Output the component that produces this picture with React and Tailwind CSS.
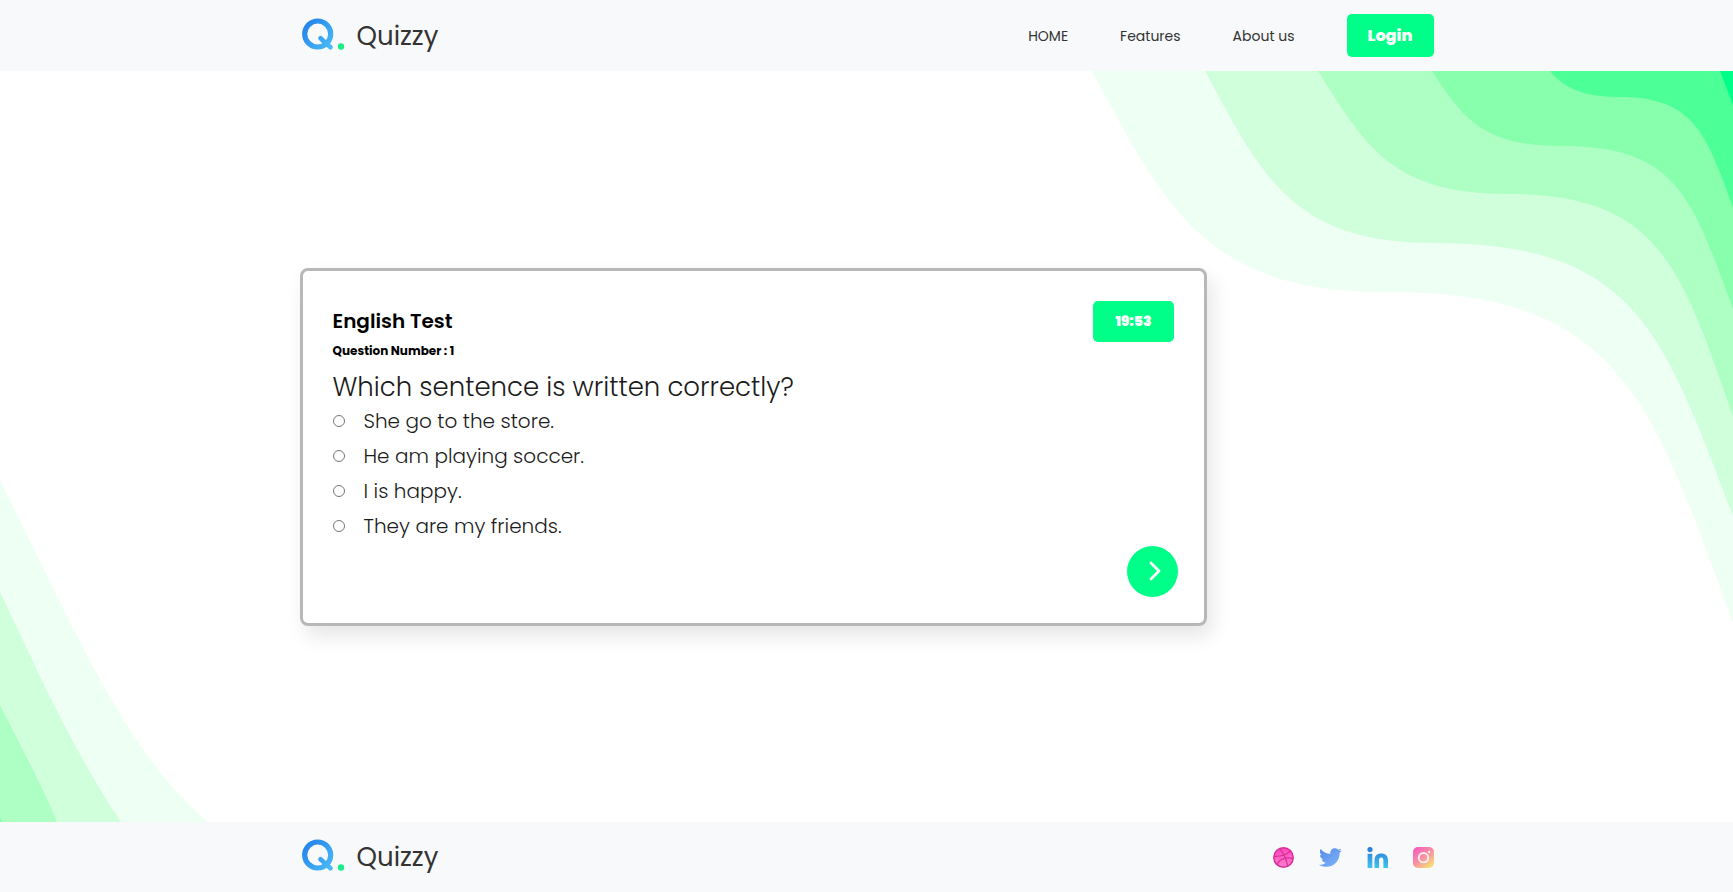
import React from "react";
import { FaTwitter } from "react-icons/fa";

const options = [
  "She go to the store.",
  "He am playing soccer.",
  "I is happy.",
  "They are my friends.",
];

function Waves() {
  return (
    <svg
      className="absolute inset-0 h-full w-full"
      viewBox="0 0 1733 751"
      preserveAspectRatio="none"
      aria-hidden="true"
    >
      <g transform="translate(0 -71)">
        <path fill="#eefff4" d="M1092 71C1165 207 1205 292 1385 292C1620 290 1652 400 1733 623V71Z" />
        <path fill="#cfffdb" d="M1205 71C1262 177 1293 243 1434 243C1636 243 1663 332 1733 516V71Z" />
        <path fill="#adffc4" d="M1318 71C1366 147 1392 194 1509 194C1660 194 1681 268 1733 416V71Z" />
        <path fill="#87ffad" d="M1432 71C1464 120 1484 146 1563 146C1678 146 1693 200 1733 309V71Z" />
        <path fill="#4dff97" d="M1550 71C1563 87 1582 97 1620 97C1696 97 1707 137 1733 207V71Z" />
        <path fill="#00ff88" d="M1720 71L1733 105V71Z" />
        <path fill="#eefff4" d="M0 480L67 617C120 722 160 782 208 822H0Z" />
        <path fill="#cfffdb" d="M0 592L43 683C72 742 98 788 121 822H0Z" />
        <path fill="#adffc4" d="M0 705L33 770Q46 795 57 822H0Z" />
        <path fill="#87ffad" d="M0 818L2 822H0Z" />
      </g>
    </svg>
  );
}

function Logo({ id }) {
  return (
    <a href="#home" className="flex items-center gap-[13px] text-[26px] leading-8 text-[#333333]">
      <svg className="h-8 w-11 overflow-visible" viewBox="0 0 44 32" fill="none" aria-hidden="true">
        <defs>
          <linearGradient id={id} x1="3" y1="2" x2="32" y2="28" gradientUnits="userSpaceOnUse">
            <stop stopColor="#2180ea" />
            <stop offset="1" stopColor="#4bbcf8" />
          </linearGradient>
        </defs>
        <circle cx="17.7" cy="14" r="13" stroke={`url(#${id})`} strokeWidth="5.2" />
        <path d="M20.5 18.2L30.5 27.2" stroke={`url(#${id})`} strokeWidth="4.6" strokeLinecap="round" />
        <circle cx="41" cy="26.5" r="3.2" fill="#1dec8b" />
      </svg>
      <span>Quizzy</span>
    </a>
  );
}

function Dribbble() {
  return (
    <svg className="size-[21px]" viewBox="0 0 21 21" fill="none" aria-hidden="true">
      <defs>
        <linearGradient id="drib" x1="0" y1="0" x2="0" y2="21" gradientUnits="userSpaceOnUse">
          <stop stopColor="#ff45b8" />
          <stop offset="1" stopColor="#ff7fce" />
        </linearGradient>
      </defs>
      <circle cx="10.5" cy="10.5" r="9.7" fill="url(#drib)" stroke="#d9309c" strokeWidth="1.5" />
      <path
        d="M6.8 1.8C10.8 6.8 13.4 12 14.7 19M1 9.4C7.5 9.6 13.8 8.2 17.4 3.7M3.9 17.4C7 11.9 13 9.9 20 11.5"
        stroke="#d9309c"
        strokeWidth="1.3"
      />
    </svg>
  );
}

function Twitter() {
  return (
    <>
      <svg className="absolute size-0" aria-hidden="true">
        <defs>
          <linearGradient id="tw" x1="0" y1="0" x2="1" y2="1">
            <stop stopColor="#5387e8" />
            <stop offset="1" stopColor="#83b9fb" />
          </linearGradient>
        </defs>
      </svg>
      <FaTwitter className="size-[23px] fill-[url(#tw)]" aria-hidden="true" />
    </>
  );
}

function Linkedin() {
  return (
    <svg className="size-[21px]" viewBox="0 0 21 21" aria-hidden="true">
      <defs>
        <linearGradient id="li" x1="0" y1="0" x2="0" y2="21" gradientUnits="userSpaceOnUse">
          <stop stopColor="#2b78d4" />
          <stop offset="1" stopColor="#42c3ee" />
        </linearGradient>
      </defs>
      <g fill="url(#li)">
        <circle cx="3" cy="2.6" r="2.6" />
        <path d="M.6 6.8H5.3V21H.6Z" />
        <path d="M7.5 21V13.5C7.5 9 10 6.5 14.2 6.5C18.5 6.5 21 9 21 13.2V21H16.4V13.5C16.4 11.6 15.8 10.6 14.3 10.6C12.7 10.6 12.1 11.7 12.1 13.5V21Z" />
      </g>
    </svg>
  );
}

function Instagram() {
  return (
    <svg className="size-[21px]" viewBox="0 0 21 21" fill="none" aria-hidden="true">
      <defs>
        <linearGradient id="ig" x1="3" y1="1" x2="18" y2="20" gradientUnits="userSpaceOnUse">
          <stop stopColor="#f65fbd" />
          <stop offset=".5" stopColor="#f793a0" />
          <stop offset="1" stopColor="#f8e075" />
        </linearGradient>
      </defs>
      <rect width="21" height="21" rx="5" fill="url(#ig)" />
      <circle cx="10.5" cy="10.7" r="4.7" stroke="#fdeef3" strokeWidth="1.9" />
      <circle cx="16.2" cy="5" r="1.2" fill="#fdeef3" />
    </svg>
  );
}

const socials = [
  ["Dribbble", Dribbble],
  ["Twitter", Twitter],
  ["LinkedIn", Linkedin],
  ["Instagram", Instagram],
];

export default function App() {
  return (
    <div className="flex min-h-screen flex-col bg-white font-[Poppins,Inter,sans-serif] text-black">
      <header className="bg-[#f8f9fb] py-[14px]">
        <div className="mx-auto flex w-full max-w-[1134px] items-center justify-between">
          <Logo id="logo-top" />
          <nav className="flex items-center gap-[52px] text-[14px] leading-[22px] text-[#333333]">
            <a href="#home">HOME</a>
            <a href="#features">Features</a>
            <a href="#about">About us</a>
            <button
              type="button"
              className="h-[43px] w-[87px] rounded-[5px] bg-[#00ff88] text-base font-extrabold text-white"
            >
              Login
            </button>
          </nav>
        </div>
      </header>

      <main className="relative flex flex-1 items-center">
        <Waves />
        <div className="relative mx-auto w-full max-w-[1134px]">
          <form className="w-4/5 rounded-lg border-3 border-[#b8b8b8] bg-white pt-[30px] pb-[26px] shadow-[5px_10px_20px_rgba(0,0,0,0.1)]">
            <div className="px-[30px]">
              <div className="flex items-center justify-between">
                <h1 className="text-[20px] font-semibold">English Test</h1>
                <time className="rounded-[5px] bg-[#00ff88] px-[22px] text-[14px] leading-[41px] font-black text-white">
                  19:53
                </time>
              </div>
              <h2 className="text-[12px] leading-[18px] font-bold">Question Number : 1</h2>
              <fieldset className="mt-[10px] text-[#1c1c1c]">
                <legend className="text-[26px] leading-[34px] font-light">
                  Which sentence is written correctly?
                </legend>
                {options.map((option) => (
                  <label key={option} className="flex h-[35px] items-center gap-[19px] text-[20px] font-light">
                    <input type="radio" name="answer" className="size-3" />
                    {option}
                  </label>
                ))}
              </fieldset>
            </div>
            <div className="mt-[2px] flex justify-end px-[26px]">
              <button
                type="button"
                aria-label="Next question"
                className="flex size-[51px] items-center justify-center rounded-full bg-[#00ff88]"
              >
                <svg className="size-6" viewBox="0 0 24 24" fill="none" aria-hidden="true">
                  <path
                    d="M11 4L19 12L11 20"
                    stroke="#fff"
                    strokeWidth="2.8"
                    strokeLinecap="round"
                    strokeLinejoin="round"
                  />
                </svg>
              </button>
            </div>
          </form>
        </div>
      </main>

      <footer className="bg-[#f8f9fb] py-[19px]">
        <div className="mx-auto flex w-full max-w-[1134px] items-center justify-between">
          <Logo id="logo-bottom" />
          <div className="flex items-center gap-[25px]">
            {socials.map(([name, Icon]) => (
              <a key={name} href={`#${name.toLowerCase()}`} aria-label={name}>
                <Icon />
              </a>
            ))}
          </div>
        </div>
      </footer>
    </div>
  );
}
